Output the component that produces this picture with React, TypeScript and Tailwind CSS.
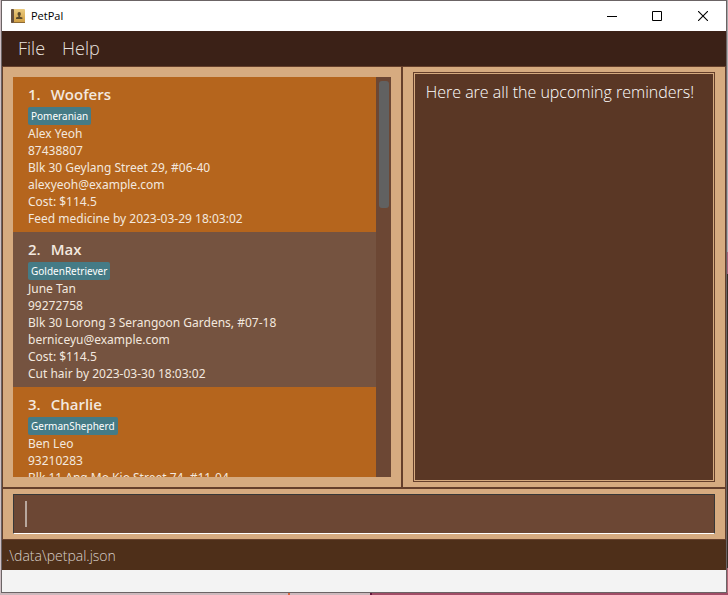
import React from "react";

type Pet = {
  name: string;
  breed: string;
  owner: string;
  phone: string;
  address: string;
  email?: string;
  cost?: string;
  reminder?: string;
};

const pets: Pet[] = [
  {
    name: "Woofers",
    breed: "Pomeranian",
    owner: "Alex Yeoh",
    phone: "87438807",
    address: "Blk 30 Geylang Street 29, #06-40",
    email: "alexyeoh@example.com",
    cost: "Cost: $114.5",
    reminder: "Feed medicine by 2023-03-29 18:03:02",
  },
  {
    name: "Max",
    breed: "GoldenRetriever",
    owner: "June Tan",
    phone: "99272758",
    address: "Blk 30 Lorong 3 Serangoon Gardens, #07-18",
    email: "berniceyu@example.com",
    cost: "Cost: $114.5",
    reminder: "Cut hair by 2023-03-30 18:03:02",
  },
  {
    name: "Charlie",
    breed: "GermanShepherd",
    owner: "Ben Leo",
    phone: "93210283",
    address: "Blk 11 Ang Mo Kio Street 74, #11-04",
  },
];

function AppIcon() {
  return (
    <svg width="14" height="14" viewBox="0 0 14 14" aria-hidden="true">
      <defs>
        <linearGradient id="cover" x1="0" y1="0" x2="0" y2="1">
          <stop offset="0" stopColor="#ebcb80" />
          <stop offset="1" stopColor="#cf9c40" />
        </linearGradient>
      </defs>
      <rect x="0" y="0" width="14" height="14" rx="1" fill="url(#cover)" />
      <rect x="0" y="0" width="3" height="14" rx="1" fill="#66503f" />
      <rect x="3" y="13" width="11" height="1" fill="#8d6a35" />
      <ellipse cx="8.2" cy="5" rx="1.7" ry="2" fill="#5b4a2c" />
      <path d="M7.4 6.5h1.6v1.2l2.4.9V10H5V8.600l2.400-.9z" fill="#5b4a2c" />
    </svg>
  );
}

function TitleBar() {
  return (
    <header className="flex h-[30px] shrink-0 items-center bg-white pl-[9px]">
      <AppIcon />
      <h1 className="ml-[6px] flex-1 text-[11px] text-black">PetPal</h1>
      <button aria-label="Minimize" className="flex h-full w-[45px] items-center justify-center">
        <svg width="10" height="10" viewBox="0 0 10 10"><path d="M0 5.5h10" stroke="#000" /></svg>
      </button>
      <button aria-label="Maximize" className="flex h-full w-[46px] items-center justify-center">
        <svg width="10" height="10" viewBox="0 0 10 10"><path d="M.5.5h9v9h-9z" fill="none" stroke="#000" /></svg>
      </button>
      <button aria-label="Close" className="flex h-full w-[46px] items-center justify-center">
        <svg width="10" height="10" viewBox="0 0 10 10"><path d="M0 0l10 10M10 0L0 10" stroke="#000" strokeWidth="1.1" /></svg>
      </button>
    </header>
  );
}

function PetCard({ pet, index }: { pet: Pet; index: number }) {
  return (
    <li className={`h-[155px] px-[15px] pt-2 font-['Noto_Sans','Open_Sans',sans-serif] text-xs leading-[17px] text-[#f3e8df] ${index % 2 ? "bg-[#755340]" : "bg-[#b5651d]"}`}>
      <h2 className="flex h-[22px] gap-[10px] font-['Open_Sans','Noto_Sans',sans-serif] text-[15px] leading-[18px] font-semibold">
        <span>{index + 1}.</span>
        <span>{pet.name}</span>
      </h2>
      <div className="flex h-[18px]">
        <span className="rounded-[2px] bg-[#457b86] px-[3px] text-[10px] leading-[18px] text-white">{pet.breed}</span>
      </div>
      <p>{pet.owner}</p>
      <p>{pet.phone}</p>
      <p>{pet.address}</p>
      <p>{pet.email}</p>
      <p>{pet.cost}</p>
      <p>{pet.reminder}</p>
    </li>
  );
}

export default function App() {
  return (
    <div className="flex h-screen flex-col bg-[#cbb8bc] font-['Open_Sans','Noto_Sans',sans-serif]">
      <div className="flex min-h-0 flex-1">
        <div className="w-px bg-[#cfc0c4]" />
        <div className="flex min-w-0 flex-1 flex-col border border-[#6b6465]">
          <TitleBar />
          <nav className="flex h-9 shrink-0 items-center gap-[17px] border-b border-[#653f2b] bg-[#3b2117] px-4 pb-px text-lg font-light text-[#e8e2df]">
            <button>File</button>
            <button>Help</button>
          </nav>
          <main className="flex min-h-0 flex-1 flex-col border-x border-[#653f2b] bg-[#d6ab80]">
            <div className="flex min-h-0 flex-1 border-b-2 border-[#653f2b]">
              <section aria-label="Pets" className="flex min-w-0 flex-[401_1_0%] border-r-2 border-[#653f2b] p-[10px]">
                <ul className="min-w-0 flex-1 overflow-hidden">
                  {pets.map((pet, i) => (
                    <PetCard key={pet.name} pet={pet} index={i} />
                  ))}
                </ul>
                <div className="w-[15px] bg-[#6c4734] px-[3px] pt-1 pr-[2px]">
                  <div className="h-[127px] rounded-[3px] bg-[#616161]" />
                </div>
              </section>
              <section aria-label="Reminders" className="flex min-w-0 flex-[321_1_0%] px-[10px] py-[5px]">
                <div className="flex-1 border border-[#653f2b] bg-[#d6ab80] p-px">
                  <p className="h-full bg-[#5a3725] px-[11px] pt-[6px] text-base leading-6 font-light text-white">
                    Here are all the upcoming reminders!
                  </p>
                </div>
              </section>
            </div>
            <div className="shrink-0 px-[10px] py-[5px]">
              <div className="relative h-10">
                <input
                  aria-label="Command"
                  className="block h-10 w-full border border-[#383838] border-b-white bg-[#6c4734] px-3 text-lg font-light text-white outline-none"
                />
                <span className="pointer-events-none absolute top-[7px] left-3 h-[26px] w-[2px] bg-[#b8a79d]" />
              </div>
            </div>
          </main>
          <footer className="shrink-0">
            <p className="h-[31px] border-t border-[#653f2b] bg-[#4e2f19] px-1 text-sm leading-[31px] font-light text-[#d9d0ca]">
              .\data\petpal.json
            </p>
            <div className="h-[22px] bg-[#f3f3f3]" />
          </footer>
        </div>
        <div className="flex w-px flex-col">
          <div className="h-[252px] bg-[#a9a9ab]" />
          <div className="h-[22px] bg-[#a8647a]" />
          <div className="flex-1 bg-[#3a2e26]" />
          <div className="h-[25px] bg-[#b06878]" />
        </div>
      </div>
      <div className="flex h-[2px] shrink-0">
        <div className="w-[288px] bg-[#cdb9bd]" />
        <div className="w-[2px] bg-[#d9653e]" />
        <div className="w-[80px] bg-[#cdb9bd]" />
        <div className="w-[2px] bg-[#64163c]" />
        <div className="flex-1 bg-[#a04c66]" />
      </div>
    </div>
  );
}
